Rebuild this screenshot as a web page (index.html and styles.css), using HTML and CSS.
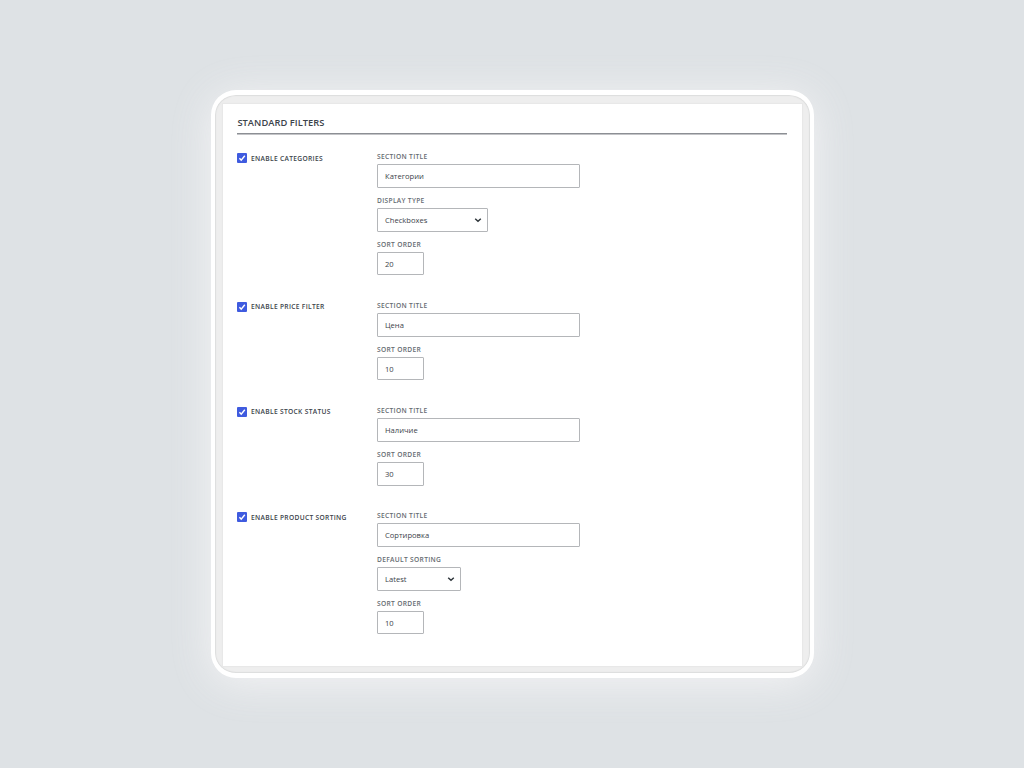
FILE: index.html
```html
<!DOCTYPE html>
<html lang="en">
<head>
    <meta charset="UTF-8">
    <meta name="viewport" content="width=device-width, initial-scale=1.0">
    <title>Standard Filters</title>
    <link rel="stylesheet" href="styles.css">
</head>
<body>
    <div class="frame">
        <form class="panel">
            <h2>Standard Filters</h2>

            <div class="filter">
                <label class="enable">
                    <span class="checkbox"><svg viewBox="0 0 10 10"><path d="M2.4 5.3 4.2 7.1 7.8 2.7"/></svg></span>
                    <span class="enable-text">Enable Categories</span>
                </label>
                <div class="fields">
                    <div class="field">
                        <span class="label">Section Title</span>
                        <div class="input">Категории</div>
                    </div>
                    <div class="field">
                        <span class="label">Display Type</span>
                        <div class="input select">Checkboxes <svg viewBox="0 0 8 6"><path d="M1.2 1.7 4 4.3 6.8 1.7"/></svg></div>
                    </div>
                    <div class="field">
                        <span class="label">Sort Order</span>
                        <div class="input number">20</div>
                    </div>
                </div>
            </div>

            <div class="filter">
                <label class="enable">
                    <span class="checkbox"><svg viewBox="0 0 10 10"><path d="M2.4 5.3 4.2 7.1 7.8 2.7"/></svg></span>
                    <span class="enable-text">Enable Price Filter</span>
                </label>
                <div class="fields">
                    <div class="field">
                        <span class="label">Section Title</span>
                        <div class="input">Цена</div>
                    </div>
                    <div class="field">
                        <span class="label">Sort Order</span>
                        <div class="input number">10</div>
                    </div>
                </div>
            </div>

            <div class="filter">
                <label class="enable">
                    <span class="checkbox"><svg viewBox="0 0 10 10"><path d="M2.4 5.3 4.2 7.1 7.8 2.7"/></svg></span>
                    <span class="enable-text">Enable Stock Status</span>
                </label>
                <div class="fields">
                    <div class="field">
                        <span class="label">Section Title</span>
                        <div class="input">Наличие</div>
                    </div>
                    <div class="field">
                        <span class="label">Sort Order</span>
                        <div class="input number">30</div>
                    </div>
                </div>
            </div>

            <div class="filter">
                <label class="enable">
                    <span class="checkbox"><svg viewBox="0 0 10 10"><path d="M2.4 5.3 4.2 7.1 7.8 2.7"/></svg></span>
                    <span class="enable-text">Enable Product Sorting</span>
                </label>
                <div class="fields">
                    <div class="field">
                        <span class="label">Section Title</span>
                        <div class="input">Сортировка</div>
                    </div>
                    <div class="field">
                        <span class="label">Default Sorting</span>
                        <div class="input select small">Latest <svg viewBox="0 0 8 6"><path d="M1.2 1.7 4 4.3 6.8 1.7"/></svg></div>
                    </div>
                    <div class="field">
                        <span class="label">Sort Order</span>
                        <div class="input number">10</div>
                    </div>
                </div>
            </div>
        </form>
    </div>
</body>
</html>
```

FILE: styles.css
```css
*{
    margin: 0;
    padding: 0;
    box-sizing: border-box;
}
body{
    height: 768px;
    padding: 90px 0 0 211px;
    background: #dee2e5;
    font-family: "Open Sans", "Noto Sans", sans-serif;
    color: #3c434a;
    overflow: hidden;
}
.frame{
    width: 603px;
    height: 588px;
    padding: 9px 8px 8px;
    border: 5px solid #fff;
    border-width: 5px 4px;
    border-radius: 25px;
    background: #eee;
    box-shadow: 0 5px 42px rgba(248,247,248,.85), inset 0 0 1px 1px #dcdddd;
}
.panel{
    width: 579px;
    height: 562px;
    padding: 12px 15px 0 14px;
    background: #fff;
    box-shadow: 0 0 1px 1px #e8e8e8;
}
h2{
    height: 18px;
    margin-bottom: 17px;
    padding-left: .4px;
    border-bottom: 1px solid #8c8f94;
    box-shadow: 0 1px 0 #c3c4c7;
    font-size: 9.3px;
    line-height: 14px;
    font-weight: 600;
    letter-spacing: .05px;
    text-transform: uppercase;
}
.filter{
    display: flex;
    margin-bottom: 24.5px;
}
.enable{
    display: flex;
    width: 140px;
    height: 14px;
    align-items: center;
    gap: 4px;
}
.checkbox{
    width: 10px;
    height: 10px;
    border-radius: 1px;
    background: #3f5bdf;
}
svg{
    display: block;
    fill: none;
    stroke: #fff;
    stroke-width: 1.4;
}
.enable-text,
.label{
    font-size: 6.65px;
    font-weight: 600;
    letter-spacing: .32px;
    text-transform: uppercase;
    white-space: nowrap;
}
.fields{
    display: flex;
    flex-direction: column;
    gap: 7px;
}
.label{
    display: block;
    height: 13.3px;
    line-height: 12px;
    color: #656b71;
}
.input{
    display: flex;
    width: 203px;
    height: 23.5px;
    align-items: center;
    padding: 0 7px;
    border: 1px solid #b4b6b9;
    border-radius: 1px;
    font-size: 7.6px;
}
.select{
    width: 111px;
    justify-content: space-between;
    padding-right: 5px;
}
.select svg{
    width: 8px;
    height: 6px;
    stroke: #2c3338;
}
.small{
    width: 84px;
}
.number{
    width: 47px;
}
```
